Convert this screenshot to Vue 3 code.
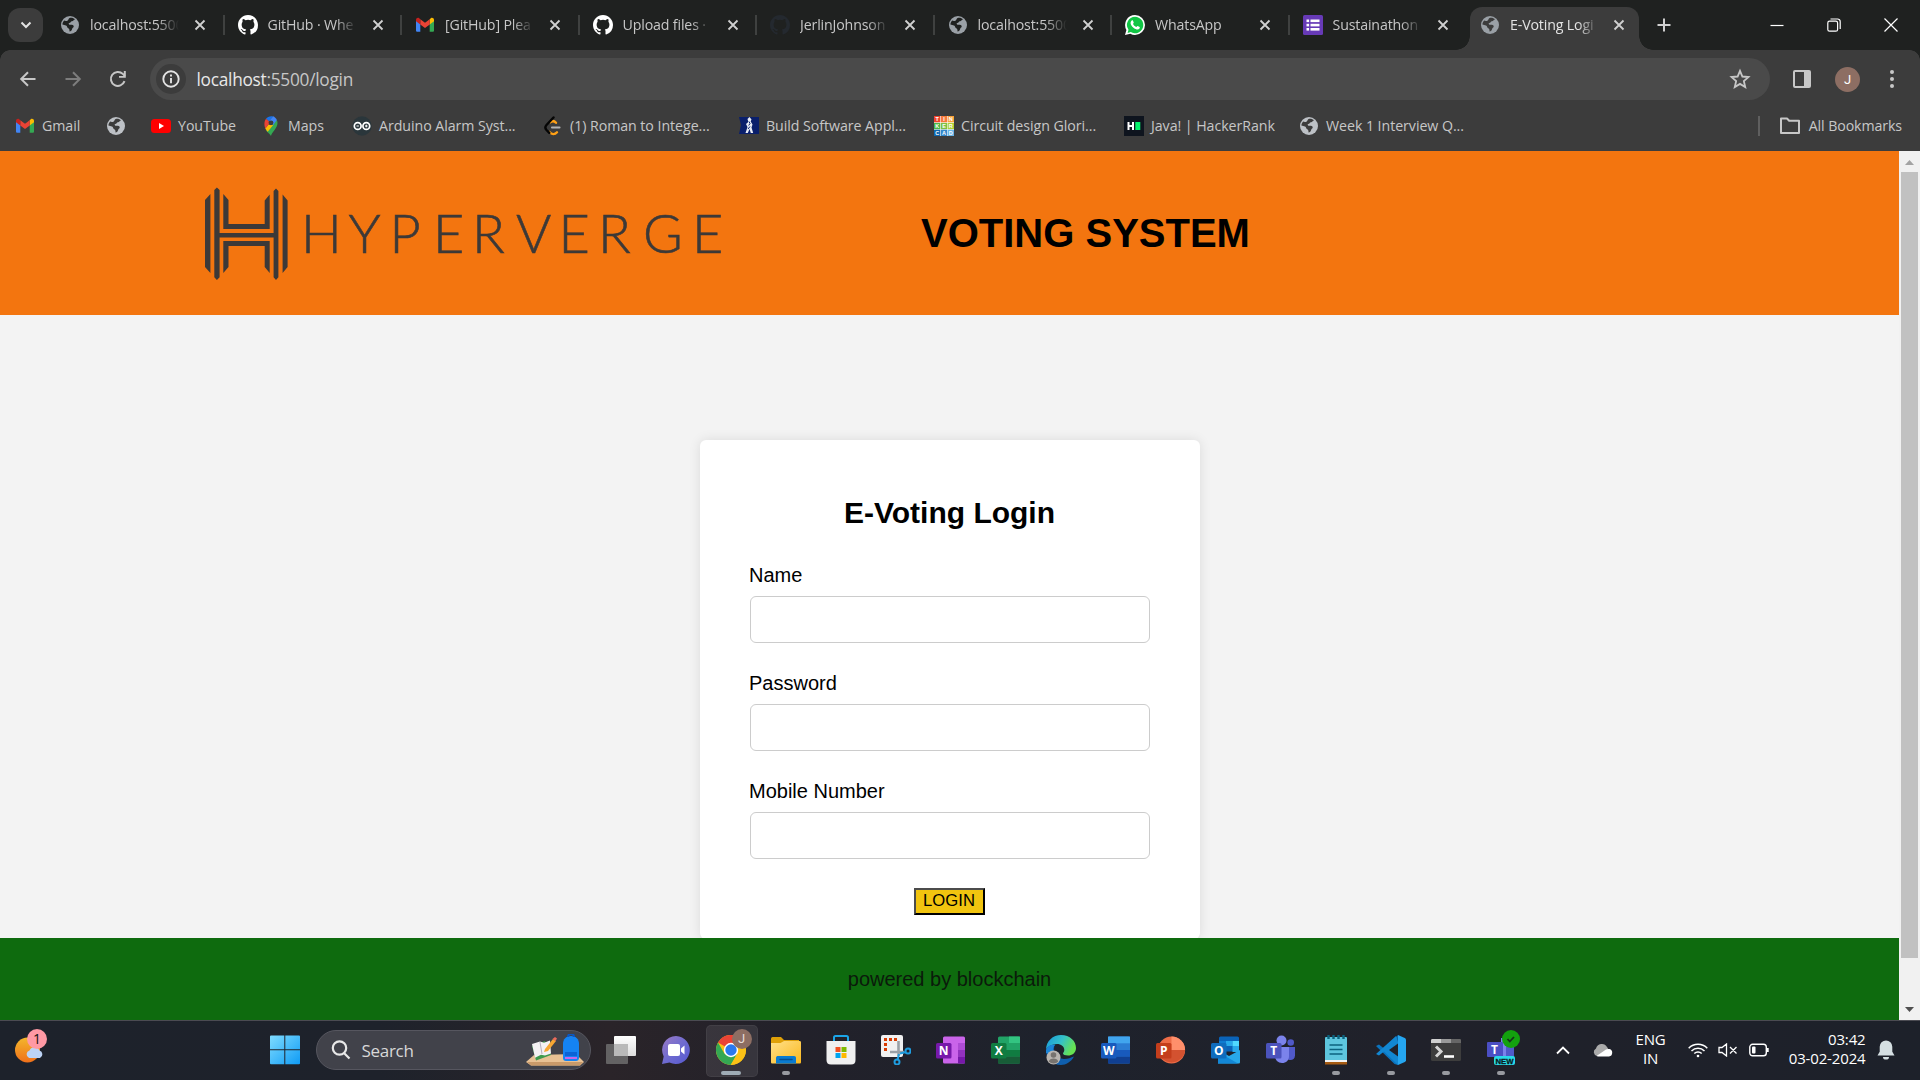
<script setup>
const globe = (c, bg) => `<svg width="20" height="20" viewBox="0 0 20 20"><circle cx="10" cy="10" r="9" fill="${c}"/><path d="M9.2 3.2c1.800-.8 4.600-.2 5.800 1.300-1.200.2-1.500 1.500-3 1.700-1.600.2-1.200 1.700-2.800 1.900-.9.200-.5 1.400.2 1.600 1.500.2 3.400-.3 4.200 1.100.7 1.400-1.200 2-1.500 3.100-.3 1.200-1.200 2.500-2.600 2.700.1-1.500-.1-2.600-1.300-3.300-1.100-.8-.9-2.300-2.200-2.900-1.200-.6-2.400-.7-3.600-1 .1-1.500.8-2.800 1.900-3.800 1.500.8 3.600.2 4-.9.200-.6.400-1.100.9-1.500z" fill="${bg}"/></svg>`
const github = (c) => `<svg width="20" height="20" viewBox="0 0 16 16"><path fill="${c}" d="M8 0C3.580 0 0 3.580 0 8c0 3.540 2.290 6.530 5.470 7.590.4.070.55-.17.55-.38 0-.19-.01-.82-.01-1.490-2.010.37-2.530-.49-2.690-.94-.09-.23-.48-.94-.82-1.130-.28-.15-.68-.52-.01-.53.63-.01 1.080.58 1.230.82.72 1.210 1.870.87 2.330.66.07-.52.28-.87.51-1.070-1.780-.2-3.640-.89-3.640-3.950 0-.87.31-1.590.82-2.150-.08-.2-.36-1.020.08-2.120 0 0 .67-.21 2.200.82a7.600 7.600 0 0 1 4 0c1.530-1.040 2.200-.82 2.200-.82.44 1.100.16 1.920.08 2.120.51.56.82 1.270.82 2.150 0 3.070-1.870 3.750-3.650 3.950.29.25.54.73.54 1.480 0 1.070-.01 1.930-.01 2.200 0 .21.15.46.55.38A8.010 8.010 0 0 0 16 8c0-4.420-3.580-8-8-8z"/></svg>`
const gmail = `<svg width="20" height="20" viewBox="0 0 20 20"><path fill="#4285f4" d="M1 5v10.500c0 .8.600 1.300 1.300 1.300h3V8z"/><path fill="#34a853" d="M14.700 16.800h3c.8 0 1.300-.6 1.300-1.300V5l-4.300 3z"/><path fill="#fbbc04" d="M14.700 4.200v5.200L19 6.200V4.800c0-1.700-1.900-2.600-3.200-1.600z"/><path fill="#ea4335" d="M5.300 9.400V4.200L10 7.700l4.700-3.500v5.200L10 12.900z"/><path fill="#c5221f" d="M1 4.800v1.400l4.300 3.200V4.200L4.200 3.200C2.900 2.200 1 3.100 1 4.800z"/></svg>`
const whatsapp = `<svg width="20" height="20" viewBox="0 0 20 20"><path fill="#fff" d="M10 0a10 10 0 0 1 0 20 10 10 0 0 1-4.700-1.200L0 20l1.400-5A10 10 0 0 1 10 0z"/><path fill="#10c544" d="M10.100 1.800a8.200 8.200 0 1 1-4.300 15.200l-3.200.9.900-3.100A8.200 8.200 0 0 1 10.100 1.800z"/><path fill="#fff" d="M6.700 5.500c.4-.4 1-.3 1.200.1l.8 1.800c.2.500-.8 1.200-.6 1.600.7 1.300 1.600 2.200 3 2.900.5.200 1.100-1.100 1.600-.9l1.900.9c.4.300.2 1.300-.3 1.800-1.200 1.200-3.300.8-5.500-.8-2.100-1.600-3.500-3.600-3.200-5.400.1-.8.500-1.500 1.100-2z"/></svg>`
const forms = `<svg width="20" height="20" viewBox="0 0 20 20"><rect width="20" height="20" rx="1.500" fill="#673ab7"/><g fill="#fff"><rect x="3.500" y="4.500" width="2.600" height="2.600"/><rect x="3.500" y="8.800" width="2.600" height="2.600"/><rect x="3.500" y="13" width="2.600" height="2.600"/><rect x="7.500" y="4.500" width="9" height="2.600"/><rect x="7.500" y="8.800" width="9" height="2.600"/><rect x="7.500" y="13" width="9" height="2.600"/></g></svg>`

const tabs = [
  { title: 'localhost:5500', icon: globe('#9aa0a6', '#1f2120') },
  { title: 'GitHub · Whe', icon: github('#fff') },
  { title: '[GitHub] Plea', icon: gmail },
  { title: 'Upload files ·', icon: github('#fff') },
  { title: 'JerlinJohnson', icon: github('#24292f') },
  { title: 'localhost:5500', icon: globe('#9aa0a6', '#1f2120') },
  { title: 'WhatsApp', icon: whatsapp },
  { title: 'Sustainathon', icon: forms },
  { title: 'E-Voting Logi', icon: globe('#9aa0a6', '#3c3c3c'), active: true },
]

const tinker = `<svg width="20" height="20" viewBox="0 0 20 20"><rect width="20" height="20" fill="#fff"/><rect width="6.300" height="6.300" fill="#f0442d"/><rect x="6.900" width="6.300" height="6.300" fill="#f57a3c"/><rect x="13.700" width="6.300" height="6.300" fill="#f9a13a"/><rect y="6.900" width="6.300" height="6.300" fill="#4cb748"/><rect x="6.900" y="6.900" width="6.300" height="6.300" fill="#7dc142"/><rect x="13.700" y="6.900" width="6.300" height="6.300" fill="#b2d234"/><rect y="13.700" width="6.300" height="6.300" fill="#1068b0"/><rect x="6.900" y="13.700" width="6.300" height="6.300" fill="#3388cc"/><rect x="13.700" y="13.700" width="6.300" height="6.300" fill="#68b4e6"/><g fill="#fff" font-family="Liberation Sans, sans-serif" font-weight="bold" font-size="5.500" text-anchor="middle"><text x="3.200" y="5.200">T</text><text x="10" y="5.200">I</text><text x="16.800" y="5.200">N</text><text x="3.200" y="12">K</text><text x="10" y="12">E</text><text x="16.800" y="12">R</text><text x="3.200" y="18.800">C</text><text x="10" y="18.800">A</text><text x="16.800" y="18.800">D</text></g></svg>`
const bookmarks = [
  { w: 91, text: 'Gmail', icon: gmail },
  { w: 45, text: '', icon: globe('#bdc1c6', '#3c3c3c') },
  { w: 110, text: 'YouTube', icon: `<svg width="20" height="20" viewBox="0 0 20 20"><rect y="3" width="20" height="14" rx="3.500" fill="#f00"/><path d="M8 7l5 3-5 3z" fill="#fff"/></svg>` },
  { w: 91, text: 'Maps', icon: `<svg width="20" height="20" viewBox="0 0 20 20"><path fill="#34a853" d="M10 20c.4-3.500 6.500-7.500 6.500-13 0-1-.2-2-.6-2.900L5 14.500c1.800 2 3.800 3.300 5 5.500z"/><path fill="#fbbc04" d="M7.500 8.500L4.200 12.600c.6 1 1.500 2.100 2.500 3.200L12.200 9z"/><path fill="#4285f4" d="M12 .3l-4.300 5L12.200 9l3.700-4.900C15 2.200 13.700.8 12 .3z"/><path fill="#1a73e8" d="M5 2.800L7.900 5.300 12 .4C9.500-.4 6.500.6 5 2.800z"/><path fill="#ea4335" d="M5 2.800C3 5.200 3 9.500 4.300 12.400L8 8 7.900 5.300z"/><circle cx="10" cy="6.800" r="2.400" fill="#3c3c3c"/></svg>` },
  { w: 191, text: 'Arduino Alarm Syst...', icon: `<svg width="20" height="20" viewBox="0 0 20 20"><circle cx="10" cy="10" r="9.700" fill="#2a363b"/><g fill="none" stroke="#fff" stroke-width="1.700"><circle cx="5.700" cy="10" r="3.400"/><circle cx="14.300" cy="10" r="3.400"/><path d="M4.500 10h2.400M13 10h2.600M14.300 8.700v2.600" stroke-width="1"/></g></svg>` },
  { w: 196, text: '(1) Roman to Intege...', icon: `<svg width="20" height="20" viewBox="0 0 20 20" fill="none" stroke-width="2.400" stroke-linecap="round"><path d="M7.200 6.300c2-1.700 4.200-1.300 5.800.5M6.500 16c2.300 2.500 5 3 7.500.3" stroke="#ffa116"/><path d="M10.500 1.500L3.500 9c-1.600 1.800-1.600 3.300 0 5l2.800 2.800" stroke="#050505"/><path d="M9 11.500h7.500" stroke="#b3b3b3" stroke-width="2.100"/></svg>` },
  { w: 195, text: 'Build Software Appl...', icon: `<svg width="20" height="20" viewBox="0 0 20 20"><path d="M0 1h20v17H0l2-9z" fill="#0a1f6b"/><path d="M10.500 1l2 2.500-.8 2 1.800 3-1 3 1.700 5.500h-2.400l-1.300-4-1.700 4H6.500l2-6-1.500-3 2.300-2-.8-3z" fill="#e8ecf5"/><path d="M10 5.500l1 2-1.300 2M9 13l2-2.500" stroke="#0a1f6b" fill="none"/></svg>` },
  { w: 190, text: 'Circuit design Glori...', icon: tinker },
  { w: 175, text: 'Java! | HackerRank', icon: `<svg width="20" height="20" viewBox="0 0 20 20"><rect width="20" height="20" fill="#0e141e"/><path d="M4.500 6v8M9 6v8M4.500 10H9" stroke="#fff" stroke-width="2"/><rect x="11.300" y="6" width="5" height="8" fill="#05f26c"/></svg>` },
  { w: 180, text: 'Week 1 Interview Q...', icon: globe('#bdc1c6', '#3c3c3c') },
]

const officeTile = (letter, box) => `<rect x="0" y="8" width="15.500" height="15.500" rx="1.500" fill="${box}"/><text x="7.700" y="20" text-anchor="middle" font-family="Open Sans, sans-serif" font-weight="bold" font-size="12" fill="#fff">${letter}</text>`
const svg30 = (body) => `<svg width="30" height="30" viewBox="0 0 30 30">${body}</svg>`
const teamsBody = `<circle cx="15.500" cy="5.500" r="5" fill="#7b83eb"/><circle cx="24.700" cy="7.500" r="3.300" fill="#5059c9"/><path d="M19 12h10v8.500c0 3-2.300 4.500-4.500 4.500S19 24 19 21z" fill="#5059c9"/><path d="M9 12h14v9c0 4.500-3 7-7 7s-7-3-7-7z" fill="#7b83eb"/>`
const apps = [
  { name: 'taskview', icon: svg30(`<defs><linearGradient id="tv1" x2="0" y2="1"><stop stop-color="#fff"/><stop offset="1" stop-color="#ddd"/></linearGradient></defs><rect x="8" y="1" width="22" height="20" rx="1" fill="url(#tv1)"/><rect x="0" y="9" width="22" height="20" rx="1" fill="#777" fill-opacity=".75"/><rect x="8" y="9" width="14" height="12" fill="#b9b9b9"/>`) },
  { name: 'chat', icon: svg30(`<defs><linearGradient id="ch1" x2="1" y2="1"><stop stop-color="#9a7ac4"/><stop offset=".5" stop-color="#6f6bd0"/><stop offset="1" stop-color="#5558d0"/></linearGradient></defs><path d="M15 1a14 14 0 1 1-6.500 26.500L1 29l1.700-7.500A14 14 0 0 1 15 1z" fill="url(#ch1)"/><rect x="7" y="9" width="12" height="12" rx="2" fill="#fff"/><path d="M20 13.500l3.500-3v9l-3.500-3z" fill="#fff"/>`) },
  { name: 'chrome', on: true, icon: svg30(`<circle cx="15" cy="15" r="15" fill="#fbc116"/><path d="M15 15L2 7.500A15 15 0 0 1 28 7.500z" fill="#ea4335"/><path d="M2 7.500A15 15 0 0 0 14.500 30L21.500 18.500 8.500 18.700z" fill="#34a853"/><path d="M15 8h13.200A15 15 0 0 1 15 30l6-11z" fill="#fbc116"/><circle cx="15" cy="15" r="7.200" fill="#fff"/><circle cx="15" cy="15" r="5.700" fill="#2a79ee"/>`) },
  { name: 'explorer', dot: true, icon: svg30(`<defs><linearGradient id="fx1" x2="1" y2="1"><stop stop-color="#ffe08a"/><stop offset="1" stop-color="#fbb91d"/></linearGradient></defs><path d="M0 4c0-1 .5-2 1.500-2H10l3 3h15v10H0z" fill="#dfa008"/><path d="M0 8h9.500L13 6h15.500c1 0 1.500.500 1.500 1.500V27c0 1-.5 1.500-1.500 1.500h-27C.5 28.500 0 28 0 27z" fill="url(#fx1)"/><path d="M5 28.500V23c0-1.500 1-2 2-2h16c1.300 0 2 .8 2 2v5.500z" fill="#0a7bd0"/><path d="M9 24.500h12" stroke="#074f91" stroke-width="1.500" stroke-linecap="round"/>`) },
  { name: 'store', icon: svg30(`<path d="M8 6V2.500C8 1.500 8.300 1 9.500 1h11c1 0 1.500.500 1.500 1.500V6" fill="none" stroke="#1ba5e8" stroke-width="2"/><path d="M.5 6h29v19c0 3-1.500 4.500-4.500 4.500H5c-3 0-4.500-1.500-4.500-4.500z" fill="#f0f0f0"/><rect x="9.500" y="12" width="5" height="5" fill="#f25022"/><rect x="15.500" y="12" width="5" height="5" fill="#7fba00"/><rect x="9.500" y="18" width="5" height="5" fill="#00a4ef"/><rect x="15.500" y="18" width="5" height="5" fill="#ffb900"/>`) },
  { name: 'snip', icon: svg30(`<rect x="0" y="0" width="22" height="22" rx="2" fill="#f1f1f1"/><path d="M16 4.500H4.500V16" fill="none" stroke="#d83b01" stroke-width="3" stroke-dasharray="3 2"/><path d="M17.500 6v15M9 17h14" stroke="#9aa0a6" stroke-width="2.600"/><g stroke="#1f9de0" fill="none" stroke-width="2"><circle cx="27" cy="16" r="2.500"/><circle cx="16" cy="27" r="2.500"/><path d="M19 18.500l6-1.500M18 19l-1.500 6"/></g>`) },
  { name: 'onenote', icon: svg30(`<rect x="7" y="1.500" width="22" height="27" rx="1.500" fill="#ca64ea"/><path d="M22 8h7v7h-7z" fill="#ae4bd5"/><path d="M22 15h7v7h-7z" fill="#9332bf"/><path d="M22 22h7v6.500h-7z" fill="#7719aa"/>${officeTile('N', '#7719aa')}`) },
  { name: 'excel', icon: svg30(`<rect x="7" y="1.500" width="22" height="27" rx="1.500" fill="#21a366"/><path d="M18 1.500h11V8H18z" fill="#33c481"/><path d="M7 15h22v6.500H7z" fill="#107c41"/><path d="M7 21.500h22v7H7z" fill="#185c37"/>${officeTile('X', '#107c41')}`) },
  { name: 'edge', icon: svg30(`<defs><linearGradient id="ed1" x2="1" y2=".4"><stop stop-color="#1698dc"/><stop offset=".55" stop-color="#35c1c8"/><stop offset="1" stop-color="#66e252"/></linearGradient></defs><path d="M28 21.500C25 27 20 30 15 30 6 30 0 23 0 15l9-6c-3 6 1 15 9 15 4 0 7-1.500 10-2.500z" fill="#0f5fae"/><path d="M0 15C0 6 7 0 15 0c9 0 15 6 15 13 0 5-4 7.500-8 7.500-3 0-5-1-5-2 0-1 1.300-1.300 1.300-3.500 0-3.500-3.300-6-7.300-6C5 9 0 13 0 15z" fill="url(#ed1)"/><path d="M0 15c1-4 5-6 9-5-2 2-2.500 5-2 9L0 18z" fill="#1b84d6"/><circle cx="7.500" cy="22.500" r="7" fill="#b9b5b0"/><circle cx="7.500" cy="20" r="2.800" fill="#77736f"/><path d="M2.800 26.500c.5-4 9-4 9.400 0-2 2.500-7 2.500-9.400 0z" fill="#77736f"/>`) },
  { name: 'word', icon: svg30(`<rect x="7" y="1.500" width="22" height="27" rx="1.500" fill="#2b7cd3"/><path d="M7 1.500h22V8.300H7z" fill="#41a5ee"/><path d="M7 15h22v6.700H7z" fill="#185abd"/><path d="M7 21.700h22v6.800H7z" fill="#103f91"/>${officeTile('W', '#185abd')}`) },
  { name: 'powerpoint', icon: svg30(`<circle cx="15.500" cy="15" r="13.600" fill="#ed6c47"/><path d="M15.500 1.400A13.600 13.600 0 0 1 29.100 15H15.500z" fill="#ff8f6b"/><path d="M2 15h27.100A13.600 13.600 0 0 1 2 15z" fill="#d35230"/>${officeTile('P', '#c43e1c')}`) },
  { name: 'outlook', icon: svg30(`<rect x="8" y="1.500" width="20" height="15" rx="1.500" fill="#0a63b8"/><path d="M8 6h7v5H8z" fill="#0f7bd0"/><path d="M15 6h6.500v5H15zM21.500 11H28v6h-6.500z" fill="#28a8ea"/><path d="M21.500 6H28v5h-6.500z" fill="#50d9ff"/><path d="M7 28.500V15l11 6 11-6v12c0 1-.5 1.500-1.500 1.500z" fill="#28a8ea"/><path d="M7 17l20 11.500H7z" fill="#1387d6"/>${officeTile('O', '#0f6cbd')}`) },
  { name: 'teams', icon: svg30(`${teamsBody}${officeTile('T', '#4b53bc')}`) },
  { name: 'notepad', dot: true, icon: svg30(`<rect x="4" y="2" width="22" height="27" rx="1" fill="#5ec6de"/><path d="M4 26h22v3.500H4z" fill="#a65b12"/><path d="M4 25h22v2H4z" fill="#f3f3f3"/><path d="M8.500 10h13M8.500 14.500h13M8.500 19h13" stroke="#0c637f" stroke-width="1.600"/><path d="M7.500 0v4M12.500 0v4M17.500 0v4M22.500 0v4" stroke="#0c637f" stroke-width="2.400"/>`) },
  { name: 'vscode', dot: true, icon: svg30(`<path d="M22 0L8 13.500 3 9.500 0 11l18.500 18L22 30l-1-8z" fill="#0b73bd"/><path d="M22 30L8 16.500l-5 4L0 19 20 1l2 6z" fill="#1287d2"/><path d="M22 0l6.800 3c.8.400 1.200 1 1.200 1.800v20.400c0 .8-.4 1.400-1.200 1.800L22 30z" fill="#25a6f0"/><path d="M22 8.500V21.500L13 15z" fill="#20222b"/>`) },
  { name: 'terminal', dot: true, icon: svg30(`<rect x="0" y="4" width="30" height="22" rx="1.500" fill="#3d3d3d"/><path d="M0 8V5.500C0 4.500.500 4 1.500 4H10v4z" fill="#d0d0d0"/><path d="M10 4h10v4H10z" fill="#999"/><path d="M20 4h8.500c1 0 1.500.500 1.500 1.500V8H20z" fill="#666"/><path d="M5 11.500l5 5-5 5" fill="none" stroke="#d5d5d5" stroke-width="3"/><path d="M13 21.500h10" stroke="#fff" stroke-width="2.600"/>`) },
  { name: 'teams-new', dot: true, icon: `<svg width="34" height="36" viewBox="-1 -5 34 36"><path d="M14 3h9v18h-9z" fill="#7b83eb"/><path d="M19 11h8v12h-8z" fill="#5059c9"/><rect x="0" y="7" width="16" height="15" rx="1" fill="#4b4fc4"/><text x="7.500" y="19" text-anchor="middle" font-family="Open Sans, sans-serif" font-weight="bold" font-size="12" fill="#fff">T</text><circle cx="24" cy="4" r="9" fill="#13a10e"/><path d="M20.500 4l2.300 2.500L27 2" fill="none" stroke="#16331a" stroke-width="1.800"/><rect x="7" y="21" width="21" height="9" rx="2" fill="#28d9e8"/><text x="17.500" y="28.500" text-anchor="middle" textLength="18" lengthAdjust="spacingAndGlyphs" font-family="Liberation Sans, sans-serif" font-weight="bold" font-size="8" fill="#0a1a20" stroke="#0a1a20" stroke-width=".3">NEW</text></svg>` },
]
const fields = [
  { id: 'name', label: 'Name', type: 'text' },
  { id: 'password', label: 'Password', type: 'password' },
  { id: 'mobile', label: 'Mobile Number', type: 'tel' },
]
</script>

<template>
  <div class="screen">
    <div class="tabstrip">
      <div class="tab-search">
        <svg width="12" height="8" viewBox="0 0 12 8"><path d="M1.500 1.500L6 6l4.500-4.500" fill="none" stroke="#e3e3e3" stroke-width="2" /></svg>
      </div>
      <div class="tabs">
        <div v-for="(t, i) in tabs" :key="i" class="tab" :class="{ active: t.active, last: i === 7 }">
          <span class="ico" v-html="t.icon"></span>
          <span class="tab-title">{{ t.title }}</span>
          <svg class="x" width="12" height="12" viewBox="0 0 12 12"><path d="M1.500 1.500l9 9M10.500 1.500l-9 9" stroke="currentColor" stroke-width="1.800" /></svg>
        </div>
      </div>
      <svg class="plus" width="14" height="14" viewBox="0 0 14 14"><path d="M7 .5v13M.5 7h13" stroke="#d0d0d0" stroke-width="2" /></svg>
      <div class="win">
        <svg width="14" height="14" viewBox="0 0 14 14"><path d="M.5 7.500h13" stroke="#fff" stroke-width="1.200" /></svg>
        <svg width="14" height="14" viewBox="0 0 14 14" fill="none" stroke="#fff" stroke-width="1.200"><rect x=".8" y="3.200" width="9.800" height="10" rx="1.800" /><path d="M3.500 1h7a2.600 2.600 0 0 1 2.700 2.700V11" /></svg>
        <svg width="14" height="14" viewBox="0 0 14 14"><path d="M.5.5l13 13M13.500.5l-13 13" stroke="#fff" stroke-width="1.200" /></svg>
      </div>
    </div>

    <div class="toolbar">
      <div class="nav">
        <svg width="20" height="20" viewBox="0 0 20 20" fill="none" stroke="#c7c7c7" stroke-width="2"><path d="M17.500 10H3.500M10 3.200L3.200 10l6.800 6.800" /></svg>
        <svg width="20" height="20" viewBox="0 0 20 20" fill="none" stroke="#7d7d7d" stroke-width="2"><path d="M2.500 10h14M10 3.200l6.800 6.800-6.800 6.800" /></svg>
        <svg width="20" height="20" viewBox="0 0 20 20"><path d="M16.500 12.200a7 7 0 1 1-1.700-7.300L17 7" fill="none" stroke="#c7c7c7" stroke-width="2" /><path d="M17.800 2v6.800H11V7h4.800V2z" fill="#c7c7c7" /></svg>
      </div>
      <div class="omnibox">
        <div class="info">
          <svg width="20" height="20" viewBox="0 0 20 20"><circle cx="10" cy="10" r="7.700" fill="none" stroke="#e3e3e3" stroke-width="1.900" /><path d="M10 9v5.200M10 5.600v2" stroke="#e3e3e3" stroke-width="1.900" /></svg>
        </div>
        <span class="url"><b>localhost</b>:5500/login</span>
        <svg class="star" width="22" height="22" viewBox="0 0 24 24"><path d="M12 3.200l2.600 6.100 6.600.6-5 4.400 1.500 6.500-5.700-3.500-5.700 3.500 1.500-6.500-5-4.400 6.600-.6z" fill="none" stroke="#c7c7c7" stroke-width="2" /></svg>
      </div>
      <div class="tools">
        <svg width="18" height="18" viewBox="0 0 18 18"><rect x="1" y="1" width="16" height="16" rx="1" fill="none" stroke="#c7c7c7" stroke-width="2" /><path d="M11 1h6v16h-6z" fill="#c7c7c7" /></svg>
        <span class="avatar">J</span>
        <svg width="6" height="18" viewBox="0 0 6 18" fill="#c7c7c7"><circle cx="3" cy="2" r="2" /><circle cx="3" cy="9" r="2" /><circle cx="3" cy="16" r="2" /></svg>
      </div>
    </div>

    <div class="bookmarks">
      <div v-for="(b, i) in bookmarks" :key="i" class="bm" :style="{ width: b.w + 'px' }">
        <span class="ico" v-html="b.icon"></span><span>{{ b.text }}</span>
      </div>
      <div class="all">
        <svg width="22" height="18" viewBox="0 0 22 18"><path d="M2 1.500h6l2.200 2.300H20v12.200H2z" fill="none" stroke="#c7c7c7" stroke-width="2" stroke-linejoin="round" /></svg>
        <span>All Bookmarks</span>
      </div>
    </div>

    <div class="viewport">
      <div class="page">
        <header>
          <svg class="logo" width="530" height="100" viewBox="200 183 530 100">
            <g fill="#3c3938">
              <path d="M205 200l5.400-6v79l-5.400-6zM214.300 190l2.600-2.500 2.700 2.500v87.300l-2.700 2.600-2.600-2.600zM273.600 191l2.400-2.500 2.400 2.500v86.300l-2.400 2.600-2.400-2.600zM282.600 194.500l5 6V267l-5 6zM219 233h55v4.400h-55z" />
              <path d="M223.300 194l5.200 6v24h36.200v-23.500l5-6V229h-46.400zM223.300 273l5.200-6v-21h36.200v21l5 6v-32h-46.400z" />
            </g>
            <text class="wordmark" y="252.700" x="301 348.500 389.500 433 472 516 558.500 598 643 692">HYPERVERGE</text>
          </svg>
          <h1>VOTING SYSTEM</h1>
        </header>
        <main>
          <form class="card" @submit.prevent>
            <h2>E-Voting Login</h2>
            <div v-for="f in fields" :key="f.id" class="field">
              <label :for="f.id">{{ f.label }}</label>
              <input :id="f.id" :type="f.type" />
            </div>
            <button type="submit">LOGIN</button>
          </form>
        </main>
        <footer>powered by blockchain</footer>
      </div>
      <div class="scroll">
        <svg width="9" height="5" viewBox="0 0 9 5"><path d="M4.500 0L9 5H0z" fill="#a3a3a3" /></svg>
        <div class="thumb"></div>
        <svg width="9" height="5" viewBox="0 0 9 5"><path d="M4.500 5L9 0H0z" fill="#505050" /></svg>
      </div>
    </div>

    <div class="taskbar">
      <div class="widget">
        <svg width="32" height="36" viewBox="0 0 32 36"><defs><linearGradient id="sun" x2="0" y2="1"><stop stop-color="#f3b72c" /><stop offset="1" stop-color="#f0701a" /></linearGradient></defs><circle cx="12.500" cy="22" r="12.500" fill="url(#sun)" /><path d="M14 30a4 4 0 0 1 .5-7.500 5.500 5.500 0 0 1 10 0A4 4 0 0 1 25 30z" fill="#bcd3f5" /></svg>
        <span class="badge">1</span>
      </div>
      <svg class="start" width="30" height="30" viewBox="0 0 30 30"><defs><linearGradient id="win" x2="1" y2="1"><stop stop-color="#7fdcff" /><stop offset="1" stop-color="#0f9bf5" /></linearGradient></defs><path d="M0 1.500Q0 .5 1 .5h13.300v13.800H0zM15.300.500H29q1 0 1 1v12.800H15.300zM0 15.300h14.300v14H1q-1 0-1-1zM15.300 15.300H30v13q0 1-1 1H15.300z" fill="url(#win)" /></svg>
      <div class="search">
        <svg width="20" height="20" viewBox="0 0 20 20" fill="none" stroke="#e8e8e8" stroke-width="2.200"><circle cx="8.500" cy="8" r="6.700" /><path d="M13 13l5.500 5.500" /></svg>
        <span>Search</span>
        <svg class="art" width="58" height="32" viewBox="0 0 58 32">
          <path d="M0 28l8-7 42-1 8 8-4 3.500H5z" fill="#e8c194" /><path d="M1 28h56l-3 3.500H5z" fill="#c99a6a" />
          <path d="M6 12l13-5 6 14-15 5.500z" fill="#3f9a4e" /><path d="M6 10l8-2.500 4 1.200 6-2.300 1 13-6 2-4-.6-6 3z" fill="#f4f1f3" /><path d="M14 8l2 12" stroke="#b6aebd" /><path d="M19 15l8-10 3 2-8 10-4 1z" fill="#f7a632" /><path d="M26.500 5l2.500-2 2 1.600-1.500 2.500z" fill="#ec6a5c" />
          <path d="M37 10c0-5 3-8 8-8s8 3 8 8v14c0 2-1.500 3-3 3H40c-2 0-3-1-3-3z" fill="#1583f2" /><path d="M42 3c0-4 6-4 6 0" fill="none" stroke="#0b57c4" stroke-width="2" /><path d="M39 18h12v4H39z" fill="#0b63d6" /><path d="M39 24h12" stroke="#c766e8" stroke-width="2" />
        </svg>
      </div>
      <div class="apps">
        <div v-for="a in apps" :key="a.name" class="app" :class="[{ on: a.on, dot: a.dot }, a.name]">
          <span class="ico" v-html="a.icon"></span>
          <span v-if="a.on" class="profile">J</span>
        </div>
      </div>
      <div class="tray">
        <svg class="caret" width="14" height="9" viewBox="0 0 14 9"><path d="M1 7.500l6-6 6 6" fill="none" stroke="#fff" stroke-width="1.800" /></svg>
        <svg class="cloud" width="20" height="14" viewBox="0 0 20 14"><path d="M4 13a4 4 0 0 1-1-7.500A6 6 0 0 1 14 4l2 3-6 6z" fill="#aaa" /><path d="M5 13.500l-1.500-.4L13 6.500a5 5 0 0 1 3.500-.4A3.800 3.800 0 0 1 16 13.500z" fill="#fff" /></svg>
        <div class="lang"><span>ENG</span><span>IN</span></div>
        <svg class="wifi" width="20" height="16" viewBox="0 0 20 16" fill="none" stroke="#fff" stroke-width="1.500"><path d="M.7 6.200a13 13 0 0 1 18.600 0M3.500 9a9.200 9.200 0 0 1 13 0M6.300 11.500a5.300 5.300 0 0 1 7.400 0" /><circle cx="10" cy="14" r="1.300" fill="#fff" stroke="none" /></svg>
        <svg class="mute" width="20" height="14" viewBox="0 0 20 14" fill="none" stroke="#fff" stroke-width="1.300"><path d="M1 4.500h3L8.500 1v12L4 9.500H1zM12 4l6.500 6.500M18.500 4L12 10.500" /></svg>
        <svg class="battery" width="21" height="14" viewBox="0 0 21 14"><rect x=".8" y="1.300" width="16.500" height="11.500" rx="2.800" fill="none" stroke="#fff" stroke-width="1.400" /><rect x="3" y="3.500" width="3.500" height="7" rx="1" fill="#fff" /><path d="M18.800 5v4" stroke="#fff" stroke-width="1.800" /></svg>
        <div class="clock"><span>03:42</span><span>03-02-2024</span></div>
        <svg class="bell" width="18" height="20" viewBox="0 0 18 20" fill="#d5dfe2"><path d="M9 .5a6.300 6.300 0 0 1 6.300 6.300v5l2.200 3.700H.5l2.200-3.700v-5A6.300 6.300 0 0 1 9 .5zM6 17h6a3 2.600 0 0 1-6 0z" /></svg>
      </div>
    </div>
  </div>
</template>

<style>
body { margin: 0; overflow: hidden; }
</style>
<style scoped>
* { box-sizing: border-box; }
.screen { width: 1920px; height: 1080px; display: flex; flex-direction: column; font-family: "Open Sans", "Noto Sans", sans-serif; font-size: 14px; background: #3c3c3c; overflow: hidden; }
svg { display: block; flex: none; }
.ico { display: flex; flex: none; }
.ico :deep(svg) { display: block; }

.tabstrip { height: 50px; background: #1f2120; display: flex; align-items: center; padding-left: 8px; flex: none; }
.tab-search { width: 35px; height: 34px; border-radius: 12px; background: #3c3c3c; display: flex; align-items: center; justify-content: center; }
.tabs { display: flex; align-self: stretch; padding: 7px 0 0 4px; }
.tab { position: relative; width: 177.500px; display: flex; align-items: center; padding: 0 0 7px 13px; color: #c7c7c7; }
.tab:not(.active):not(.last)::after { content: ""; position: absolute; right: 0; top: 8px; width: 2px; height: 20px; background: #3f4140; }
.tab .ico { width: 20px; }
.tab-title { width: 89px; margin-left: 10px; overflow: hidden; white-space: nowrap; font-size: 14.200px; letter-spacing: -0.150px; line-height: 20px; -webkit-mask-image: linear-gradient(90deg, #000 76%, transparent 100%); mask-image: linear-gradient(90deg, #000 76%, transparent 100%); }
.x { margin-left: 15px; color: #d0d0d0; }
.tab.active { width: 169px; margin-left: 3px; padding-left: 10px; background: #3c3c3c; border-radius: 12px 12px 0 0; color: #e3e3e3; }
.tab.active .x { margin-left: 14px; }
.tab.active::before, .tab.active::after { content: ""; position: absolute; bottom: 0; width: 14px; height: 14px; }
.tab.active::before { left: -14px; background: radial-gradient(circle at 0 0, #1f2120 13.500px, #3c3c3c 14px); }
.tab.active::after { right: -14px; background: radial-gradient(circle at 100% 0, #1f2120 13.500px, #3c3c3c 14px); }
.plus { margin-left: 18px; }
.win { margin-left: auto; display: flex; gap: 43px; padding-right: 22px; }

.toolbar { height: 58px; flex: none; display: flex; align-items: center; background: radial-gradient(circle at 10px 10px, #3c3c3c 9.500px, #1f2120 10px) 0 0 / 10px 10px no-repeat, radial-gradient(circle at 0 10px, #3c3c3c 9.500px, #1f2120 10px) 100% 0 / 10px 10px no-repeat; }
.nav { display: flex; gap: 25px; padding-left: 18px; width: 150px; }
.omnibox { width: 1620px; height: 42px; border-radius: 21px; background: #4a4a4a; display: flex; align-items: center; padding: 0 19px 0 6px; }
.info { width: 30px; height: 30px; border-radius: 50%; background: #3c3c3c; display: flex; align-items: center; justify-content: center; }
.url { margin-left: 10.500px; font-size: 17.300px; letter-spacing: -0.270px; color: #c7c7c7; }
.url b { font-weight: 400; color: #e8e8e8; }
.star { margin-left: auto; }
.tools { display: flex; align-items: center; padding-left: 23px; }
.avatar { width: 25px; height: 25px; border-radius: 50%; background: #8d6e63; color: #fff; margin: 0 29px 0 24px; display: flex; align-items: center; justify-content: center; font-family: Roboto, sans-serif; font-size: 13px; }
.bookmarks { height: 43px; flex: none; display: flex; align-items: center; padding: 0 18px 8px 15px; color: #c7c7c7; white-space: nowrap; font-size: 14.200px; }
.bm { display: flex; align-items: center; gap: 7px; letter-spacing: -0.050px; flex: none; }
.all { margin-left: auto; display: flex; align-items: center; gap: 8px; padding-left: 19px; border-left: 2px solid #5f5f5f; height: 20px; letter-spacing: -0.100px; }

.viewport { height: 869px; flex: none; display: flex; font-family: "Liberation Sans", Arial, sans-serif; font-size: 20px; color: #000; }
.page { width: 1899px; display: flex; flex-direction: column; }
header { height: 164px; background: #f3750f; display: flex; align-items: center; padding-left: 200px; flex: none; }
.wordmark { font-family: Lato, sans-serif; font-weight: 300; font-size: 54px; fill: #3c3938; stroke: #3c3938; stroke-width: .6px; }
h1 { margin: 0 0 0 191px; font-size: 40px; line-height: 46px; white-space: nowrap; }
main { height: 623px; background: #f3f3f3; padding-top: 125px; overflow: hidden; flex: none; display: flex; justify-content: center; align-items: flex-start; }
.card { width: 500px; height: 499px; background: #fff; border-radius: 6px; box-shadow: 0 0 12px rgba(0, 0, 0, .1); padding: 55px 50px 0; display: flex; flex-direction: column; margin-left: 1px; flex: none; }
h2 { margin: 0 1px 26px 0; font-size: 30px; line-height: 35px; height: 36px; text-align: center; }
.field { height: 108px; display: flex; flex-direction: column; flex: none; }
label { line-height: 23px; margin: 7px 0 9px -1px; }
input { height: 47px; border: 1px solid #ccc; border-radius: 6px; background: #fff; padding: 0 10px; outline: none; }
button { width: 71px; height: 27px; align-self: center; margin: 7px 2px 0 0; border: 2px solid #000; border-color: #4c4c4c #000 #000 #4c4c4c; border-radius: 0; background: #f1c40f; padding: 0 0 2px; font: 16.670px/19px "Liberation Sans", Arial, sans-serif; flex: none; }
footer { height: 82px; background: #0e6b0e; display: flex; align-items: center; justify-content: center; color: #0b1a0b; }
.scroll { width: 21px; background: #f1f1f1; display: flex; flex-direction: column; align-items: center; padding: 9px 0 8px; }
.thumb { width: 17px; height: 786px; background: #c1c1c1; margin-top: 7px; margin-bottom: auto; }

.taskbar { height: 60px; flex: none; display: flex; align-items: center; border-top: 1px solid #4b4b52; padding-bottom: 1px; background: linear-gradient(90deg, #1d222b 0, #1e222b 380px, #2a2429 610px, #22212a 800px, #1e222c 1050px, #20212a 1400px, #1d212a 1920px); color: #fff; }
.widget { position: relative; width: 269.500px; padding-left: 15px; height: 45px; }
.badge { position: absolute; left: 27px; top: 1px; width: 20px; height: 20px; border-radius: 50%; background: #ff99a4; color: #111; font-size: 14px; line-height: 20px; text-align: center; }
.search { width: 275px; height: 40px; margin-left: 16px; border-radius: 20px; border: 1px solid #56565f; background: #41424a; display: flex; align-items: center; padding: 0 6px 0 14px; font-size: 17px; letter-spacing: -0.300px; color: #d8d8d8; }
.search span { margin-left: 11px; }
.art { margin-left: auto; }
.apps { display: flex; margin-left: 3px; }
.app { position: relative; width: 55px; height: 50px; display: flex; align-items: center; justify-content: center; }
.app.on::before { content: ""; position: absolute; left: 2px; top: 0; width: 50px; height: 50px; border-radius: 5px; background: rgba(255, 255, 255, .09); border: 1px solid rgba(255, 255, 255, .05); }
.app .ico { position: relative; }
.app.on::after, .app.dot::after { content: ""; position: absolute; bottom: 0; left: 50%; height: 4px; border-radius: 2px; width: 8px; margin-left: -4px; background: #989aa0; }
.app.on::after { width: 20px; margin-left: -10px; background: #9fabb5; }
.profile { position: absolute; left: 28px; top: 4px; width: 20px; height: 20px; border-radius: 50%; background: #8d6e63; color: #e5dcd8; font-family: Roboto, sans-serif; font-size: 13px; line-height: 20px; text-align: center; }
.teams-new .ico { top: -2px; left: 2px; }
.tray { display: flex; align-items: center; margin-left: 27px; }
.cloud { margin-left: 23px; }
.lang, .clock { display: flex; flex-direction: column; line-height: 19.500px; font-size: 15px; letter-spacing: -0.150px; position: relative; top: -1px; }
.lang { width: 50px; align-items: center; margin-left: 13px; }
.wifi { margin-left: 12px; }
.mute { margin-left: 10px; }
.battery { margin-left: 11px; }
.clock { width: 90px; align-items: flex-end; margin-left: 6px; }
.bell { margin-left: 11px; }
</style>
